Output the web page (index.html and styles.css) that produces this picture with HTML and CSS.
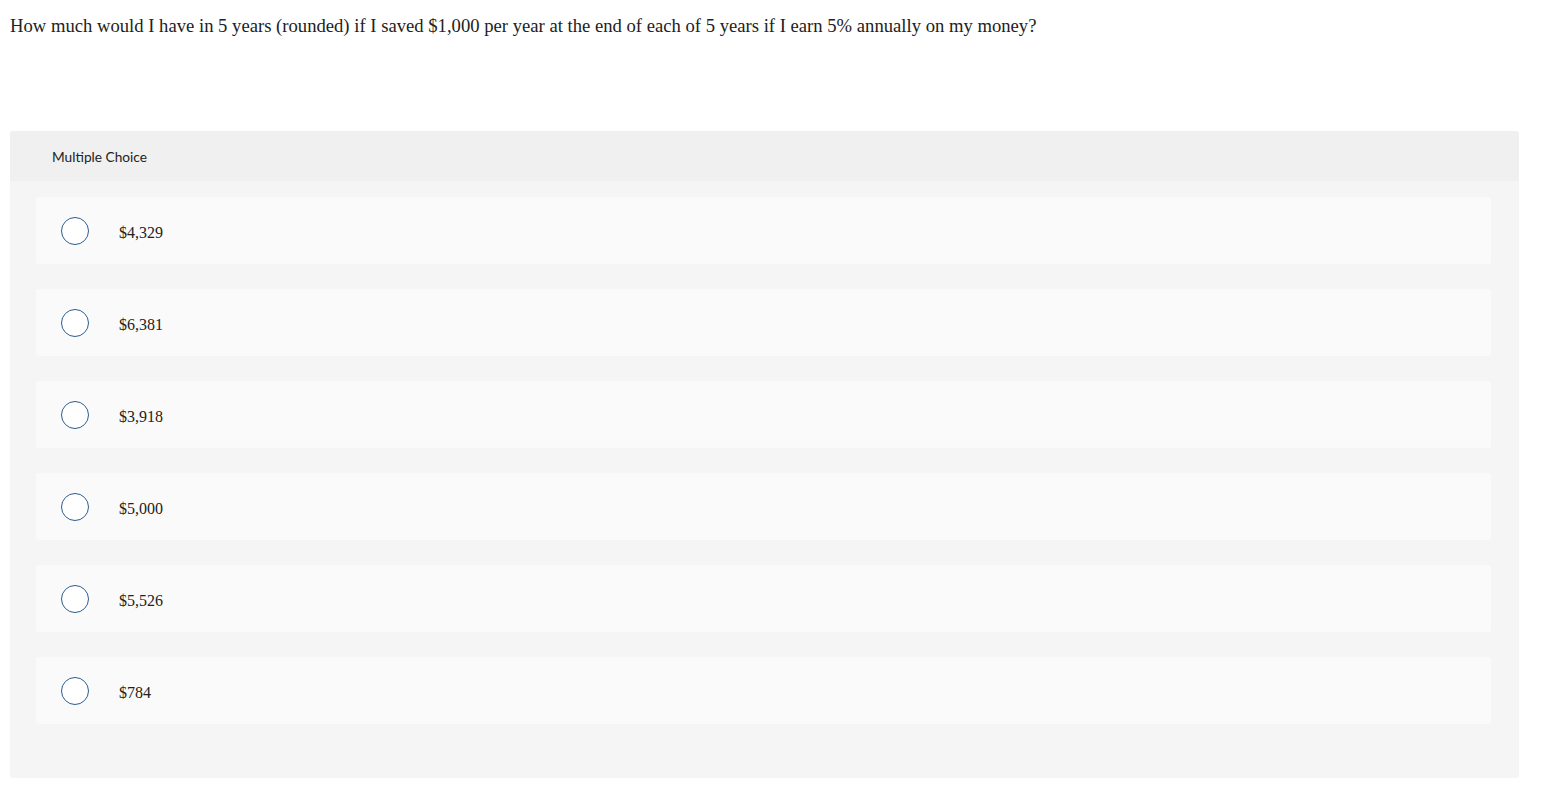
FILE: index.html
```html
<!DOCTYPE html>
<html lang="en">
<head>
<meta charset="utf-8">
<title>Multiple Choice</title>
<link rel="stylesheet" href="styles.css">
</head>
<body>
<div class="question">How much would I have in 5 years (rounded) if I saved $1,000 per year at the end of each of 5 years if I earn 5% annually on my money?</div>
<div class="panel">
  <div class="panel-header">Multiple Choice</div>
  <div class="options">
    <div class="option"><span class="radio"></span><span class="label">$4,329</span></div>
    <div class="option"><span class="radio"></span><span class="label">$6,381</span></div>
    <div class="option"><span class="radio"></span><span class="label">$3,918</span></div>
    <div class="option"><span class="radio"></span><span class="label">$5,000</span></div>
    <div class="option"><span class="radio"></span><span class="label">$5,526</span></div>
    <div class="option"><span class="radio"></span><span class="label">$784</span></div>
  </div>
</div>
</body>
</html>
```
FILE: styles.css
```css
html, body {
  margin: 0;
  padding: 0;
  background: #ffffff;
}
.question {
  padding: 15px 0 0 10px;
  font-family: "Liberation Serif", "Times New Roman", serif;
  font-size: 18.65px;
  line-height: 22px;
  color: #222222;
}
.panel {
  margin: 94px 0 0 10px;
  width: 1509px;
  background: #f5f5f5;
  border-radius: 3px;
  overflow: hidden;
}
.panel-header {
  height: 50px;
  display: flex;
  align-items: center;
  padding-left: 42px;
  background: #f0f0f0;
  font-family: "Lato", "Open Sans", sans-serif;
  font-size: 13.7px;
  color: #222222;
}
.options {
  display: flex;
  flex-direction: column;
  gap: 25px;
  padding: 16px 28px 54px 26px;
}
.option {
  height: 67px;
  display: flex;
  align-items: center;
  padding-left: 25px;
  background: #fafafa;
  border-radius: 3px;
}
.radio {
  width: 28px;
  height: 28px;
  box-sizing: border-box;
  border: 1.5px solid #2c5d8f;
  border-radius: 50%;
  background: #ffffff;
  flex: none;
}
.label {
  margin-left: 30px;
  padding-top: 4px;
  font-family: "Liberation Serif", "Times New Roman", serif;
  font-size: 16px;
  color: #222222;
}
```
